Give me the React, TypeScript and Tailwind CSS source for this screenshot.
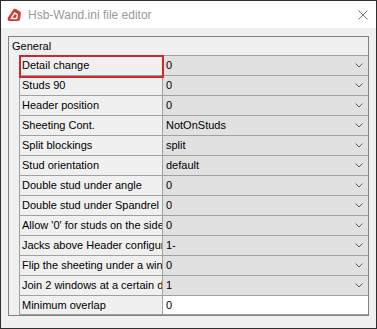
type Row = {
  label: string;
  value: string;
  combo?: boolean;
};

const rows: Row[] = [
  { label: 'Detail change', value: '0', combo: true },
  { label: 'Studs 90', value: '0', combo: true },
  { label: 'Header position', value: '0', combo: true },
  { label: 'Sheeting Cont.', value: 'NotOnStuds', combo: true },
  { label: 'Split blockings', value: 'split', combo: true },
  { label: 'Stud orientation', value: 'default', combo: true },
  { label: 'Double stud under angle', value: '0', combo: true },
  { label: 'Double stud under Spandrel', value: '0', combo: true },
  { label: "Allow '0' for studs on the sides", value: '0', combo: true },
  { label: 'Jacks above Header configuration', value: '1-', combo: true },
  { label: 'Flip the sheeting under a window', value: '0', combo: true },
  { label: 'Join 2 windows at a certain distance', value: '1', combo: true },
  { label: 'Minimum overlap', value: '0' },
];

const AppIcon = () => (
  <svg width="15" height="14" viewBox="0 0 15 14">
    <path d="M0.8 9.8 L6.4 1.4 Q7.4 0.2 8.8 1 L13 3.6 Q14 4.3 13.8 5.4 L13 11.2 Q12.7 13 10.9 13 L2.6 13 Q0 12.8 0.8 9.8 Z" fill="#d9342b" />
    <path d="M4.2 10.4 L7.6 5 L10.3 6.6 L9.8 10.4 Z" fill="none" stroke="#fff" strokeWidth="1.5" strokeLinejoin="round" />
  </svg>
);

const Chevron = () => (
  <svg className="mr-[5px]" width="8" height="5" viewBox="0 0 8 5">
    <path d="M0.5 0.5 L4 4 L7.5 0.5" fill="none" stroke="#5a5a5a" strokeWidth="1" />
  </svg>
);

export default function App() {
  return (
    <div
      className="flex h-[329px] w-[377px] flex-col border border-[#2d2d2d] bg-[#f0f0f0] text-black"
      style={{ fontFamily: '"Liberation Sans", Arial, sans-serif' }}
    >
      {/* 제목 표시줄 */}
      <div className="flex h-[27px] shrink-0 items-center bg-white">
        <div className="ml-[6px] flex h-[14px] w-[15px] items-center justify-center">
          <AppIcon />
        </div>
        <span className="ml-[6px] text-[12px] text-[#999999]">Hsb-Wand.ini file editor</span>
        <svg className="ml-auto mr-[8px]" width="10" height="10" viewBox="0 0 10 10">
          <path d="M0.5 0.5 L9.5 9.5 M9.5 0.5 L0.5 9.5" stroke="#777" strokeWidth="1" />
        </svg>
      </div>

      {/* 속성 그리드 */}
      <div className="px-[7px] pt-[8px]">
        <div className="relative border border-[#828282] bg-[#f0f0f0] text-[11px]">
          <div className="flex h-[18px] items-center pl-[3px]">General</div>
          <div className="ml-[10px]">
            {rows.map((row, i) => (
              <div
                key={row.label}
                className={`flex h-[20px] border-t border-[#a0a0a0] ${i === rows.length - 1 ? 'border-b' : ''}`}
              >
                <div className="flex w-[144px] shrink-0 items-center overflow-hidden whitespace-nowrap border-l border-r border-[#a0a0a0] pl-[2px]">
                  {row.label}
                </div>
                <div
                  className={`flex flex-1 items-center pl-[3px] ${row.combo ? 'bg-[#e1e1e1]' : 'bg-white'}`}
                >
                  <span className="flex-1">{row.value}</span>
                  {row.combo && <Chevron />}
                </div>
              </div>
            ))}
          </div>

          {/* 선택 표시 */}
          <div className="pointer-events-none absolute left-[10px] top-[18px] h-[23px] w-[145px] border-2 border-[#cc2a2a]" />
        </div>
      </div>
    </div>
  );
}
